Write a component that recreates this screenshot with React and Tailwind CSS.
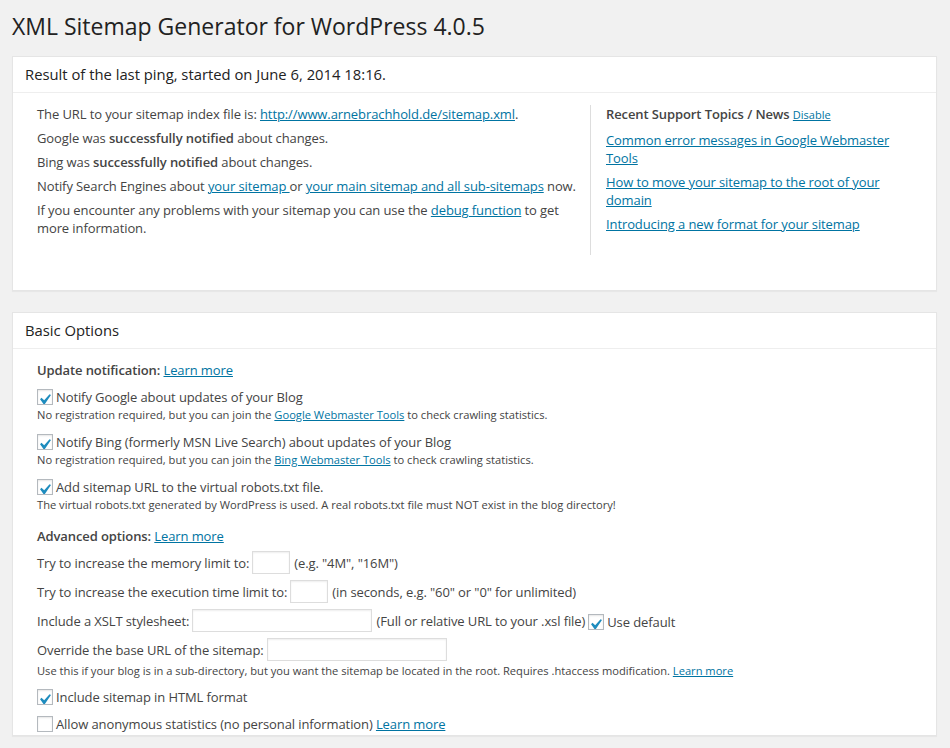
import React from "react";

const A = ({ children, className = "" }) => (
  <a href="#" className={"text-[#0074a2] underline " + className}>{children}</a>
);

function Check({ checked }) {
  return (
    <span className="relative inline-block w-4 h-4 shrink-0 border border-[#b4b9be] bg-white shadow-[inset_0_1px_2px_rgba(0,0,0,0.1)]">
      {checked && (
        <svg className="absolute left-[-4px] top-[-1px]" width="21" height="21" viewBox="0 0 20 20">
          <path d="M14.83 4.89l1.34.94-5.81 8.38H9.02L5.78 9.67l1.34-1.25 2.57 2.4z" fill="#1e8cbe" />
        </svg>
      )}
    </span>
  );
}

function Input({ w }) {
  return (
    <span className={"inline-block h-[23px] border border-[#ddd] bg-white shadow-[inset_0_1px_2px_rgba(0,0,0,0.07)] " + w} />
  );
}

function CheckRow({ checked, children, className = "" }) {
  return (
    <div className={"flex items-center gap-[3px] h-[18px] leading-[18px] " + className}>
      <Check checked={checked} />
      <span>{children}</span>
    </div>
  );
}

function Desc({ children, className = "" }) {
  return <div className={"text-[11.15px] leading-[15px] tracking-normal " + className}>{children}</div>;
}

export default function App() {
  return (
    <div className="min-h-[748px] bg-[#f1f1f1] text-[#444] text-[13px] leading-[18px]" style={{ fontFamily: '"Open Sans", "Noto Sans", sans-serif' }}>
      <div className="pl-3 pt-[11px]">
        <h1 className="text-[23px] leading-[31px] text-[#222] font-normal">XML Sitemap Generator for WordPress 4.0.5</h1>

        <div className="mt-[14px] w-[925px] bg-white border border-[#e5e5e5] shadow-[0_1px_1px_rgba(0,0,0,0.04)]">
          <div className="px-3 py-2 text-[14.8px] leading-[19px] text-[#222] border-b border-[#eee]">
            Result of the last ping, started on June 6, 2014 18:16.
          </div>
          <div className="flex pl-6 pt-3 pb-[35px] tracking-[-0.1px]">
            <div className="w-[548px] flex flex-col gap-[6px]">
              <p>The URL to your sitemap index file is: <A>http://www.arnebrachhold.de/sitemap.xml</A>.</p>
              <p>Google was <b className="font-semibold">successfully notified</b> about changes.</p>
              <p>Bing was <b className="font-semibold">successfully notified</b> about changes.</p>
              <p>Notify Search Engines about <A>your sitemap </A> or <A>your main sitemap and all sub-sitemaps</A> now.</p>
              <p>If you encounter any problems with your sitemap you can use the <A>debug function</A> to get more information.</p>
            </div>
            <div className="ml-[5px] border-l border-[#ddd] pl-[15px] w-[320px] h-[150px] flex flex-col gap-[6px]">
              <div className="font-semibold">
                Recent Support Topics / News <A className="text-[11px] font-normal tracking-normal">Disable</A>
              </div>
              <div className="w-[300px] flex flex-col gap-[6px] mt-[1px]">
                <A>Common error messages in Google Webmaster Tools</A>
                <A>How to move your sitemap to the root of your domain</A>
                <A>Introducing a new format for your sitemap</A>
              </div>
            </div>
          </div>
        </div>

        <div className="mt-[21px] w-[925px] bg-white border border-[#e5e5e5] shadow-[0_1px_1px_rgba(0,0,0,0.04)]">
          <div className="px-3 py-2 text-[14.8px] leading-[19px] text-[#222] border-b border-[#eee]">
            Basic Options
          </div>
          <div className="pl-6 pt-3 pb-[2px] tracking-[-0.1px]">
            <div><b className="font-semibold">Update notification:</b> <A>Learn more</A></div>

            <CheckRow checked className="mt-[9px]">Notify Google about updates of your Blog</CheckRow>
            <Desc className="mt-[1px]">No registration required, but you can join the <A>Google Webmaster Tools</A> to check crawling statistics.</Desc>

            <CheckRow checked className="mt-[11px]">Notify Bing (formerly MSN Live Search) about updates of your Blog</CheckRow>
            <Desc className="mt-[1px]">No registration required, but you can join the <A>Bing Webmaster Tools</A> to check crawling statistics.</Desc>

            <CheckRow checked className="mt-[11px]">Add sitemap URL to the virtual robots.txt file.</CheckRow>
            <Desc className="mt-[1px]">The virtual robots.txt generated by WordPress is used. A real robots.txt file must NOT exist in the blog directory!</Desc>

            <div className="mt-[15px]"><b className="font-semibold">Advanced options:</b> <A>Learn more</A></div>

            <div className="mt-[6px] flex items-center h-[23px]">
              <span>Try to increase the memory limit to:</span>
              <Input w="w-[38px] ml-[3px]" />
              <span className="ml-[4px]">(e.g. "4M", "16M")</span>
            </div>
            <div className="mt-[6px] flex items-center h-[23px]">
              <span>Try to increase the execution time limit to:</span>
              <Input w="w-[38px] ml-[3px]" />
              <span className="ml-[4px]">(in seconds, e.g. "60" or "0" for unlimited)</span>
            </div>
            <div className="mt-[6px] flex items-center h-[23px]">
              <span>Include a XSLT stylesheet:</span>
              <Input w="w-[180px] ml-[3px]" />
              <span className="ml-[4px]">(Full or relative URL to your .xsl file)</span>
              <span className="ml-[3px] flex items-center gap-[3px] mt-[2px]"><Check checked /><span>Use default</span></span>
            </div>
            <div className="mt-[6px] flex items-center h-[23px]">
              <span>Override the base URL of the sitemap:</span>
              <Input w="w-[180px] ml-[3px]" />
            </div>
            <Desc className="mt-[2px]">Use this if your blog is in a sub-directory, but you want the sitemap be located in the root. Requires .htaccess modification. <A>Learn more</A></Desc>

            <CheckRow checked className="mt-[10px]">Include sitemap in HTML format</CheckRow>
            <CheckRow className="mt-[9px]">Allow anonymous statistics (no personal information) <A>Learn more</A></CheckRow>
          </div>
        </div>
      </div>
    </div>
  );
}
